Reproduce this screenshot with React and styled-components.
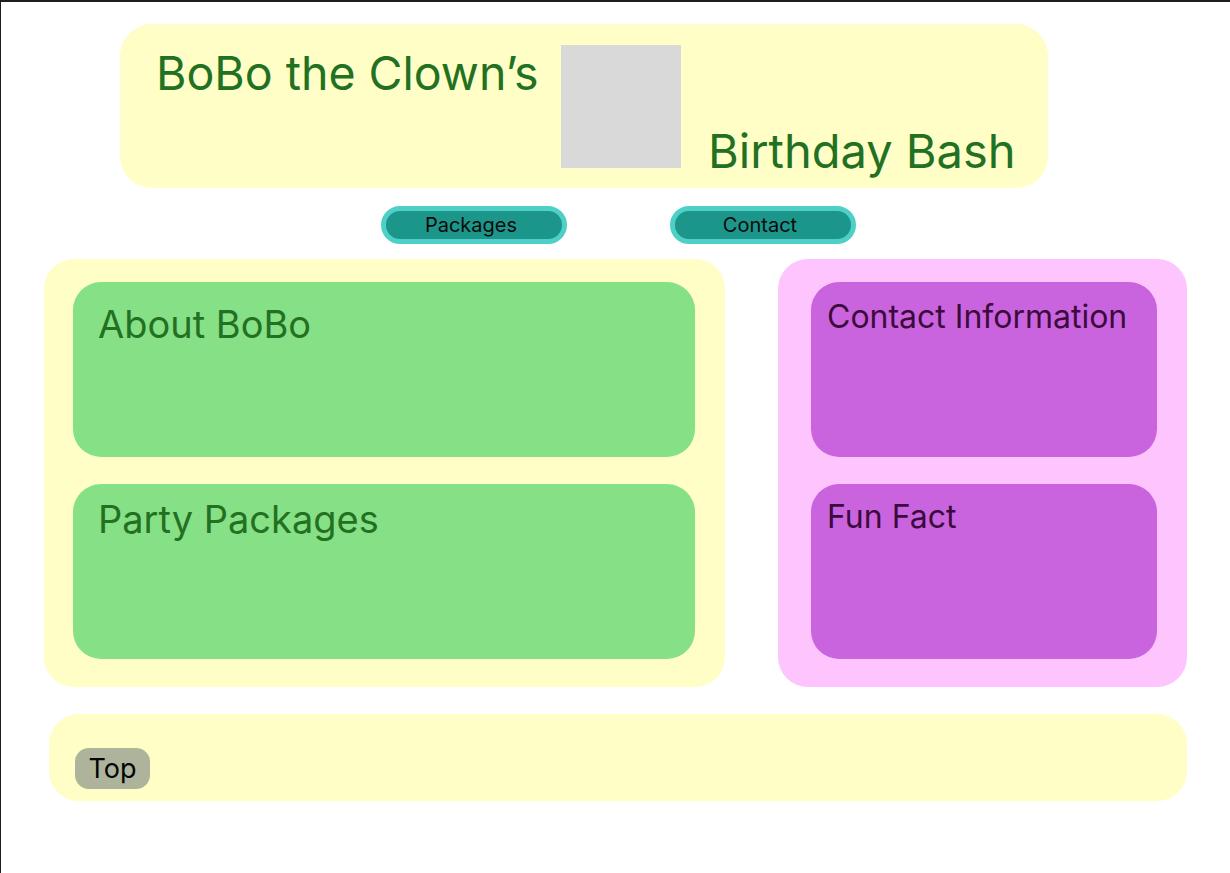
import React from 'react';
import styled, { createGlobalStyle } from 'styled-components';

const GlobalStyle = createGlobalStyle`
  html, body {
    margin: 0;
    padding: 0;
    background: #ffffff;
  }
  body {
    font-family: Inter, "Noto Sans", "Liberation Sans", sans-serif;
  }
`;

const Page = styled.div`
  box-sizing: border-box;
  width: 1230px;
  height: 873px;
  border-top: 2px solid #1e1e1e;
  border-left: 1px solid #1e1e1e;
  display: flex;
  flex-direction: column;
  overflow: hidden;
`;

const Header = styled.header`
  box-sizing: border-box;
  display: flex;
  margin: 22px 0 0 119px;
  width: 928px;
  height: 164px;
  padding: 21px 0 8px 36px;
  background: #fefec6;
  border-radius: 32px;
`;

const Title = styled.h1`
  margin: 0;
  font-size: ${(p) => p.$size || 47}px;
  font-weight: 400;
  line-height: 1.21;
  color: #227123;
  white-space: nowrap;
  align-self: ${(p) => (p.$bottom ? 'flex-end' : 'flex-start')};
  width: ${(p) => p.$width || 'auto'};
  margin-left: ${(p) => p.$offset || '0'};
`;

const Picture = styled.div`
  flex: none;
  width: 120px;
  height: 123px;
  background: #d9d9d9;
  align-self: flex-start;
`;

const Nav = styled.nav`
  display: flex;
  gap: 103px;
  margin: 18px 0 0 380px;
`;

const NavButton = styled.button`
  box-sizing: border-box;
  width: 186px;
  height: 38px;
  border: 5px solid #4fd0c6;
  border-radius: 19px;
  background: #1c958a;
  color: #0b0b0b;
  font-family: Inter, "Noto Sans", sans-serif;
  font-size: 20px;
  line-height: 1;
  padding: 0 6px 1px 0;
  cursor: pointer;
`;

const Main = styled.main`
  display: flex;
  margin: 15px 0 0 43px;
  gap: 53px;
`;

const Panel = styled.section`
  box-sizing: border-box;
  display: flex;
  flex-direction: column;
  gap: 27px;
  width: ${(p) => p.$width};
  height: 428px;
  padding: 23px 30px 28px ${(p) => p.$left};
  background: ${(p) => p.$bg};
  border-radius: 30px;
`;

const Card = styled.article`
  box-sizing: border-box;
  height: 175px;
  padding: ${(p) => p.$top}px 20px 0 ${(p) => p.$left}px;
  background: ${(p) => p.$bg};
  border-radius: 28px;
`;

const CardTitle = styled.h2`
  margin: 0;
  font-weight: 400;
  line-height: 1.21;
  font-size: ${(p) => p.$size}px;
  color: ${(p) => p.$color};
  white-space: nowrap;
`;

const Footer = styled.footer`
  box-sizing: border-box;
  display: flex;
  align-items: flex-start;
  margin: 27px 0 0 48px;
  width: 1138px;
  height: 87px;
  padding: 34px 0 0 26px;
  background: #fefec6;
  border-radius: 30px;
`;

const TopButton = styled.button`
  box-sizing: border-box;
  width: 75px;
  height: 41px;
  border: none;
  border-radius: 14px;
  background: #adb49b;
  color: #050505;
  font-family: Inter, "Noto Sans", sans-serif;
  font-size: 27px;
  padding: 0;
  cursor: pointer;
`;

const green = { bg: '#86e086', color: '#247023' };
const purple = { bg: '#c964de', color: '#3c0a3c' };

export default function App() {
  return (
    <>
      <GlobalStyle />
      <Page>
        <Header>
          <Title $width="405px" $size={46.5}>BoBo the Clown’s</Title>
          <Picture />
          <Title $bottom $offset="27px">Birthday Bash</Title>
        </Header>
        <Nav>
          <NavButton type="button">Packages</NavButton>
          <NavButton type="button">Contact</NavButton>
        </Nav>
        <Main>
          <Panel $width="681px" $left="29px" $bg="#fefec6">
            <Card $bg={green.bg} $top={20} $left={25}>
              <CardTitle $size={38} $color={green.color}>About BoBo</CardTitle>
            </Card>
            <Card $bg={green.bg} $top={13} $left={25}>
              <CardTitle $size={38} $color={green.color}>Party Packages</CardTitle>
            </Card>
          </Panel>
          <Panel $width="409px" $left="33px" $bg="#fdc4fd">
            <Card $bg={purple.bg} $top={16} $left={16}>
              <CardTitle $size={32} $color={purple.color}>Contact Information</CardTitle>
            </Card>
            <Card $bg={purple.bg} $top={14} $left={16}>
              <CardTitle $size={32} $color={purple.color}>Fun Fact</CardTitle>
            </Card>
          </Panel>
        </Main>
        <Footer>
          <TopButton type="button">Top</TopButton>
        </Footer>
      </Page>
    </>
  );
}
